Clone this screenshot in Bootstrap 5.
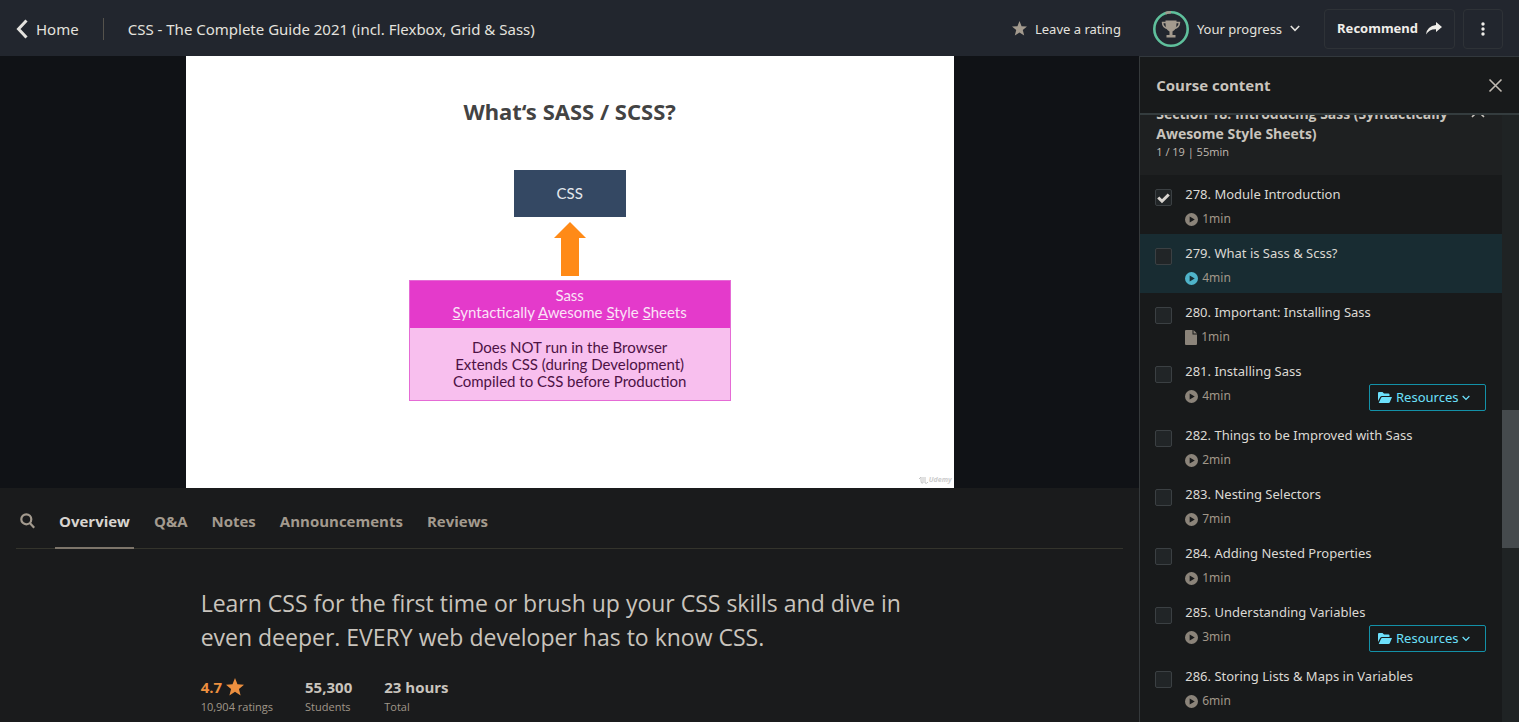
<!DOCTYPE html>
<html lang="en" data-bs-theme="dark">
<head>
<meta charset="utf-8">
<meta name="viewport" content="width=device-width, initial-scale=1">
<title>CSS - The Complete Guide 2021</title>
<link href="https://cdn.jsdelivr.net/npm/bootstrap@5.3.0/dist/css/bootstrap.min.css" rel="stylesheet">
<style>
body { font-family: "Noto Sans", "Open Sans", sans-serif; font-size: 13px; line-height: 20px; background: #1a1b1c; color: #dcd9d4; }
a, a:hover { color: inherit; text-decoration: none; }
svg { display: block; flex: none; }
.topbar { height: 56px; background: #22262e; color: #e4e2de; padding-top: 1px; }
.course-title { font-size: 15px; }
.top-divider { width: 1px; height: 22px; background: #55524c; }
.btn-plain { --bs-btn-color: #e4e2de; --bs-btn-padding-x: 0; --bs-btn-padding-y: 0; --bs-btn-border-width: 0; --bs-btn-font-size: 13px; --bs-btn-line-height: 20px; }
.btn-frame { --bs-btn-color: #f0eeea; --bs-btn-border-color: #2e3237; --bs-btn-border-radius: 4px; --bs-btn-font-size: 13px; --bs-btn-padding-y: 0; height: 40px; }
.btn-square { width: 40px; --bs-btn-padding-x: 0; }
.stage { background: #101216; }
.slide { width: 100%; max-width: 768px; aspect-ratio: 16 / 9; background: #fff; font-family: Lato, sans-serif; font-size: 15px; line-height: 17px; padding-top: 42px; }
.slide-title { font-family: "Noto Sans", sans-serif; font-weight: 700; font-size: 22px; line-height: 26px; color: #434343; margin-bottom: 46px; }
.css-box { width: 112px; height: 47px; background: #344863; color: #e4e8ee; }
.sass-box { width: 322px; border: 1px solid #e56bd5; }
.sass-head { background: #e43acb; color: #fbe3f7; padding: 6px 0 7px; }
.sass-body { background: #f8bfee; color: #4d1245; padding: 11px 0 10px; }
.watermark { right: 2px; bottom: 2px; font: italic 700 7px/12px "Open Sans", sans-serif; color: #cdcdcd; }
.tab-row { margin: 0 16px; border-bottom: 1px solid #34342c; padding-top: 6px; }
.tab-row .nav-link { color: #a39a8e; font-family: "Open Sans", sans-serif; font-size: 15px; font-weight: 700; padding: 17px 4px 16px; border-bottom: 2px solid transparent; margin-bottom: -1px; line-height: 20px; }
.tab-row .nav-link.active { color: #d8d4cf; border-bottom-color: #7d756a; }
.about { width: 738px; max-width: 100%; color: #c9c4bd; padding-top: 37px; font-family: "Open Sans", sans-serif; }
.lede { font-size: 23px; line-height: 34px; margin-bottom: 23px; }
.stat { font-weight: 700; font-size: 15px; }
.caption { font-size: 11px; color: #a09789; }
.rating { color: #ec8f3f; }
.panel { background: #181a1b; border-left: 1px solid #35393b; border-top: 1px solid #32383d; }
.panel-head { height: 58px; border-bottom: 2px solid #343c3e; font-family: "Open Sans", sans-serif; font-size: 15px; color: #c9c4bd; }
.section-head { background: #1e2021; color: #c9c4bd; margin-top: -11px; padding: 0 16px 13px; height: 71px; font-family: "Open Sans", sans-serif; font-size: 14px; line-height: 20px; }
.section-head .caption { line-height: 16px; color: #c0bab2; }
.lesson { padding: 8px 16px 5px 15px; line-height: 22px; }
.lesson.playing { background: #182c32; }
.lesson .form-check-input { width: 17px; height: 17px; margin: 6px 13px 0 0; border: 1px solid #3b4043; border-radius: 2px; background-color: #212527; flex: none; }
.lesson .form-check-input:checked { background-image: url("data:image/svg+xml,%3csvg xmlns='http://www.w3.org/2000/svg' viewBox='0 0 20 20'%3e%3cpath fill='none' stroke='%23d8d4cf' stroke-width='4' d='m3 10 5 5 9-9'/%3e%3c/svg%3e"); }
.lesson-meta { color: #a09789; font-size: 12px; margin-top: 2px; }
.lesson-time { padding-top: 2px; line-height: 20px; }
.btn-resources { --bs-btn-color: #6ce0fb; --bs-btn-border-color: #1391a8; --bs-btn-border-radius: 2px; --bs-btn-font-size: 13px; --bs-btn-line-height: 25px; --bs-btn-padding-y: 0; --bs-btn-padding-x: 8px; width: 117px; }
.scroll-track { width: 17px; background: #1f2324; }
.scroll-thumb { height: 138px; margin-top: 295px; background: #454a4d; }
</style>
</head>
<body>
<svg class="d-none" xmlns="http://www.w3.org/2000/svg">
  <symbol id="star" viewBox="0 0 16 16"><path fill="currentColor" d="M8 0l2.200 5.500 5.800.4-4.500 3.800 1.500 5.800L8 12.300 3 15.500l1.500-5.800L0 5.900l5.800-.4z"/></symbol>
  <symbol id="play" viewBox="0 0 12 12"><path fill="currentColor" fill-rule="evenodd" d="M6 0a6 6 0 1 1 0 12A6 6 0 0 1 6 0zM4.300 3.200v5.600L9 6z"/></symbol>
  <symbol id="page" viewBox="0 0 12 15"><path fill="currentColor" d="M0 1q0-1 1-1h6.500v4.500H12V14q0 1-1 1H1q-1 0-1-1zM8.500 0L12 3.500H8.500z"/></symbol>
  <symbol id="folder" viewBox="0 0 14 11"><path fill="currentColor" d="M0 9V1q0-1 1-1h3.500L6 1.500h4.500q1 0 1 1V4H4Q2.800 4 2.200 5zM.7 11l2.400-5.300Q3.400 5 4.200 5H14l-2.200 5.200q-.3.800-1.300.8z"/></symbol>
  <symbol id="chevron" viewBox="0 0 10 7"><path fill="none" stroke="currentColor" stroke-width="1.600" d="M.8 1L5 5.300 9.200 1"/></symbol>
</svg>
<div class="vh-100 d-flex flex-column overflow-hidden">
  <header class="topbar d-flex align-items-center px-3 flex-shrink-0">
    <a href="#" class="d-flex align-items-center course-title">
      <svg class="me-2" width="12" height="20" viewBox="0 0 12 20"><path fill="none" stroke="currentColor" stroke-width="3" d="M10.500 1.500L2.500 10l8 8.500"/></svg>Home</a>
    <div class="top-divider mx-4"></div>
    <a href="#" class="course-title me-auto">CSS - The Complete Guide 2021 (incl. Flexbox, Grid &amp; Sass)</a>
    <button type="button" class="btn btn-plain d-flex align-items-center gap-2 me-4">
      <svg width="15" height="15" color="#a39a8e"><use href="#star"/></svg>Leave a rating</button>
    <button type="button" class="btn btn-plain d-flex align-items-center gap-2 ms-2 me-4">
      <svg width="36" height="36" viewBox="0 0 36 36"><circle cx="18" cy="18" r="16.700" fill="none" stroke="#5fc09c" stroke-width="2.600"/><path d="M12.500 2.200Q15 1.300 18 1.300" fill="none" stroke="#a39a8e" stroke-width="2.600"/><path fill="#a39a8e" d="M12.500 9.500h11v3q0 6-4 8v3.500h3v2.500h-9V24h3v-3.500q-4-2-4-8z"/><path fill="none" stroke="#a39a8e" stroke-width="1.600" d="M13.500 11.500H9.600q0 5 5.400 6M22.500 11.500h3.900q0 5-5.400 6"/></svg>Your progress
      <svg width="10" height="7"><use href="#chevron"/></svg></button>
    <button type="button" class="btn btn-frame fw-bold d-flex align-items-center gap-2 me-2">Recommend
      <svg width="16" height="13" viewBox="0 0 16 13"><path fill="currentColor" d="M10 0l6 5-6 5V7.300Q3.500 7 0 12.500 1 4 10 3z"/></svg></button>
    <button type="button" class="btn btn-frame btn-square d-flex align-items-center justify-content-center" aria-label="More">
      <svg width="4" height="14" viewBox="0 0 4 14" fill="currentColor"><circle cx="2" cy="2" r="1.700"/><circle cx="2" cy="7" r="1.700"/><circle cx="2" cy="12" r="1.700"/></svg></button>
  </header>
  <div class="row g-0 flex-grow-1 overflow-hidden">
    <main class="col-9 h-100 overflow-hidden">
      <div class="stage d-flex justify-content-center">
        <div class="slide position-relative d-flex flex-column align-items-center text-center">
          <h1 class="slide-title">What‘s SASS / SCSS?</h1>
          <div class="css-box d-flex align-items-center justify-content-center">CSS</div>
          <svg class="my-1" width="32" height="55" viewBox="0 0 32 55"><path fill="#ff8a17" d="M16 1l16 16h-7v38H7V17H0z"/></svg>
          <div class="sass-box">
            <div class="sass-head">Sass<br><u>S</u>yntactically <u>A</u>wesome <u>S</u>tyle <u>S</u>heets</div>
            <div class="sass-body">Does NOT run in the Browser<br>Extends CSS (during Development)<br>Compiled to CSS before Production</div>
          </div>
          <div class="watermark position-absolute d-flex align-items-center"><svg width="10" height="9" viewBox="0 0 10 9"><path fill="none" stroke="#c4c4c4" d="M0 3l2-2v4q0 3 2 2V1M6 1v6q2 1 3-1"/></svg>Udemy</div>
        </div>
      </div>
      <nav class="tab-row nav align-items-center gap-3">
        <a href="#" class="px-1" aria-label="Search"><svg width="15" height="16" viewBox="0 0 15 16"><path fill="none" stroke="#a39a8e" stroke-width="2.200" d="M11.300 6.300a5 5 0 1 1-10 0 5 5 0 0 1 10 0zM9.800 10l4.400 4.800"/></svg></a>
        <a href="#" class="nav-link active">Overview</a>
        <a href="#" class="nav-link">Q&amp;A</a>
        <a href="#" class="nav-link">Notes</a>
        <a href="#" class="nav-link">Announcements</a>
        <a href="#" class="nav-link">Reviews</a>
      </nav>
      <section class="about mx-auto">
        <p class="lede">Learn CSS for the first time or brush up your CSS skills and dive in even deeper. EVERY web developer has to know CSS.</p>
        <div class="d-flex gap-4">
          <div class="me-2"><div class="stat rating d-flex align-items-center gap-1">4.7 <svg width="18" height="18"><use href="#star"/></svg></div><div class="caption">10,904 ratings</div></div>
          <div class="me-2"><div class="stat">55,300</div><div class="caption">Students</div></div>
          <div><div class="stat">23 hours</div><div class="caption">Total</div></div>
        </div>
      </section>
    </main>
    <aside class="panel col-3 h-100 d-flex flex-column overflow-hidden">
      <div class="panel-head d-flex align-items-center justify-content-between px-3 flex-shrink-0">
        <strong>Course content</strong>
        <button type="button" class="btn btn-plain" aria-label="Close"><svg width="15" height="15" viewBox="0 0 15 15"><path stroke="#c0bab2" stroke-width="1.600" d="M1.500 1.500l12 12M13.500 1.500l-12 12"/></svg></button>
      </div>
      <div class="d-flex flex-grow-1 overflow-hidden">
        <div class="lessons flex-grow-1 overflow-hidden">
          <div class="section-head d-flex justify-content-between">
            <div><strong>Section 18: Introducing Sass (Syntactically Awesome Style Sheets)</strong><div class="caption">1 / 19 | 55min</div></div>
            <svg class="mt-1" width="16" height="10" viewBox="0 0 16 10"><path fill="none" stroke="currentColor" stroke-width="1.600" d="M2 9l6-6 6 6"/></svg>
          </div>
          <div id="lessonList"></div>
        </div>
        <div class="scroll-track flex-shrink-0"><div class="scroll-thumb"></div></div>
      </div>
    </aside>
  </div>
</div>
<script src="https://cdn.jsdelivr.net/npm/bootstrap@5.3.0/dist/js/bootstrap.bundle.min.js"></script>
<script>
const lessons = [
  { n: 278, title: "Module Introduction", min: 1, done: true },
  { n: 279, title: "What is Sass & Scss?", min: 4, playing: true },
  { n: 280, title: "Important: Installing Sass", min: 1, page: true },
  { n: 281, title: "Installing Sass", min: 4, files: true },
  { n: 282, title: "Things to be Improved with Sass", min: 2 },
  { n: 283, title: "Nesting Selectors", min: 7 },
  { n: 284, title: "Adding Nested Properties", min: 1 },
  { n: 285, title: "Understanding Variables", min: 3, files: true },
  { n: 286, title: "Storing Lists & Maps in Variables", min: 6 }
];
document.getElementById("lessonList").innerHTML = lessons.map(l => `
  <div class="lesson d-flex align-items-start ${l.playing ? "playing" : ""}">
    <input class="form-check-input" type="checkbox" id="l${l.n}" ${l.done ? "checked" : ""}>
    <div class="flex-grow-1">
      <label class="d-block" for="l${l.n}">${l.n}. ${l.title.replace("&", "&amp;")}</label>
      <div class="lesson-meta d-flex align-items-start justify-content-between">
        <span class="lesson-time d-flex align-items-center gap-1"><svg width="${l.page ? 12 : 13}" height="${l.page ? 15 : 13}" color="${l.playing ? "#4fb3c9" : "#8b847a"}"><use href="#${l.page ? "page" : "play"}"/></svg>${l.min}min</span>
        ${l.files ? `<button type="button" class="btn btn-resources d-flex align-items-center gap-1"><svg width="14" height="11"><use href="#folder"/></svg>Resources<svg width="8" height="6"><use href="#chevron"/></svg></button>` : ""}
      </div>
    </div>
  </div>`).join("");
</script>
</body>
</html>
